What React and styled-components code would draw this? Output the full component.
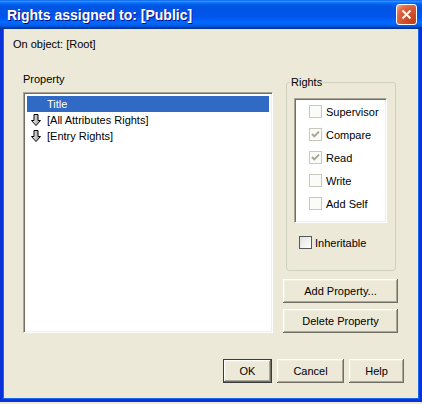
import React from "react";
import styled, { createGlobalStyle } from "styled-components";

const GlobalStyle = createGlobalStyle`
  html, body {
    margin: 0;
    padding: 0;
    background: #ece9d8;
  }
  body {
    font-family: "Liberation Sans", Arial, sans-serif;
    font-size: 11px;
    color: #000;
  }
  * {
    box-sizing: border-box;
  }
`;

// Window frame
const Window = styled.div`
  width: 422px;
  height: 402px;
  display: flex;
  flex-direction: column;
`;

const TitleBar = styled.div`
  height: 29px;
  flex: none;
  display: flex;
  align-items: center;
  justify-content: space-between;
  padding: 0 5px 0 7px;
  background: linear-gradient(
    180deg,
    #0058ee 0%,
    #3593ff 4%,
    #288eff 6%,
    #127dff 8%,
    #036ffc 10%,
    #0262ee 14%,
    #0057e5 20%,
    #0054e3 24%,
    #0055eb 56%,
    #005bf5 66%,
    #026afe 76%,
    #0062ef 86%,
    #0052d6 92%,
    #0040ab 94%,
    #003092 100%
  );
`;

const Title = styled.span`
  color: #fff;
  font-weight: bold;
  font-size: 14px;
  line-height: 16px;
  text-shadow: 1px 1px #0f1089;
`;

const CloseButton = styled.button`
  width: 21px;
  height: 21px;
  padding: 0;
  margin-top: -1px;
  border: 1px solid #fff;
  border-radius: 3px;
  display: flex;
  align-items: center;
  justify-content: center;
  background: radial-gradient(
    circle at 85% 85%,
    #c2401a 0%,
    #d6532d 50%,
    #e06f4e 75%,
    #f0b29c 100%
  );
`;

const Body = styled.div`
  flex: 1;
  display: flex;
  flex-direction: column;
  background: #ece9d8;
  border: 3px solid #0831d9;
  border-top: none;
  box-shadow: inset 1px 0 #166aee, inset -1px 0 #166aee, inset 0 -1px #166aee;
  padding: 9px 0 0 10px;
`;

const Caption = styled.div`
  line-height: 13px;
`;

// Main area
const MainRow = styled.div`
  display: flex;
  align-items: flex-start;
  gap: 10px;
  margin-top: 22px;
  padding-left: 10px;
`;

const LeftColumn = styled.div`
  width: 250px;
  display: flex;
  flex-direction: column;
`;

const RightColumn = styled.div`
  width: 115px;
  display: flex;
  flex-direction: column;
  margin-top: 9px;
`;

const FieldLabel = styled.div`
  line-height: 13px;
`;

const Sunken = styled.div`
  background: #fff;
  border-style: solid;
  border-width: 1px;
  border-color: #aca899 #fff #fff #aca899;
  box-shadow: inset 1px 1px #716f64, inset -1px -1px #f1efe2;
`;

const ListBox = styled(Sunken)`
  margin-top: 6px;
  height: 241px;
  padding: 3px;
`;

const ListRow = styled.div`
  height: 16px;
  display: flex;
  align-items: center;
  background: ${(p) => (p.$selected ? "#316ac5" : "transparent")};
  color: ${(p) => (p.$selected ? "#fff" : "#000")};
`;

const IconSlot = styled.span`
  width: 20px;
  height: 16px;
  flex: none;
  display: flex;
  align-items: center;
  padding-left: 4px;
`;

// Rights group
const GroupBox = styled.div`
  margin-left: 3px;
  width: 110px;
  border: 1px solid #d0d0bf;
  border-radius: 3px;
  display: flex;
  flex-direction: column;
  padding-bottom: 21px;
`;

const Legend = styled.span`
  align-self: flex-start;
  margin: -8px 0 0 3px;
  padding: 0 1px;
  line-height: 14px;
  background: #ece9d8;
`;

const CheckList = styled(Sunken)`
  margin: 9px 0 0 7px;
  width: 93px;
  height: 125px;
  padding-top: 1px;
`;

const CheckRow = styled.label`
  height: 23px;
  display: flex;
  align-items: center;
  padding-left: ${(p) => p.$indent}px;
  margin-top: ${(p) => p.$top || 0}px;
`;

const Box = styled.span`
  width: 13px;
  height: 13px;
  flex: none;
  margin-right: ${(p) => p.$gap}px;
  display: flex;
  align-items: center;
  justify-content: center;
  border: 1px solid ${(p) => (p.$disabled ? "#cac8bb" : "#55585a")};
  background: ${(p) =>
    p.$disabled ? "#fbfbf7" : "linear-gradient(135deg, #e2e2dd 0%, #fff 100%)"};
`;

const InheritRow = styled(CheckRow)`
  height: 13px;
`;

// Buttons
const Button = styled.button`
  height: 24px;
  width: ${(p) => p.$width}px;
  margin-top: ${(p) => p.$top || 0}px;
  padding: 0;
  font-family: "Liberation Sans", Arial, sans-serif;
  font-size: 11px;
  color: #000;
  background: #ece9d8;
  border: ${(p) => (p.$default ? "1px solid #3c3c3c" : "none")};
  box-shadow: inset -1px -1px #716f64, inset 1px 1px #fff,
    inset -2px -2px #aca899, inset 2px 2px #f1efe2;
`;

const Footer = styled.div`
  display: flex;
  justify-content: flex-end;
  gap: 5px;
  margin-top: 26px;
  padding-right: 15px;
`;

function DownArrow() {
  return (
    <svg width="10" height="13" viewBox="0 0 10 13">
      <defs>
        <linearGradient id="arw" x1="0" x2="1" y1="0" y2="0">
          <stop offset="0" stopColor="#ffffff" />
          <stop offset="1" stopColor="#8c8c8c" />
        </linearGradient>
      </defs>
      <polygon
        points="3,0.5 7,0.5 7,6.5 9.5,6.5 5,11.5 0.5,6.5 3,6.5"
        fill="url(#arw)"
        stroke="#000"
        strokeWidth="1"
      />
    </svg>
  );
}

function Check({ checked, disabled, gap }) {
  return (
    <Box $disabled={disabled} $gap={gap}>
      {checked && (
        <svg width="9" height="9" viewBox="0 0 9 9">
          <path
            d="M1 4 L3.3 6.4 L8 1.6"
            fill="none"
            stroke={disabled ? "#a8a699" : "#21a121"}
            strokeWidth="2"
          />
        </svg>
      )}
    </Box>
  );
}

const rights = [
  { name: "Supervisor", checked: false },
  { name: "Compare", checked: true },
  { name: "Read", checked: true },
  { name: "Write", checked: false },
  { name: "Add Self", checked: false },
];

const properties = [
  { name: "Title", icon: false, selected: true },
  { name: "[All Attributes Rights]", icon: true },
  { name: "[Entry Rights]", icon: true },
];

export default function App() {
  return (
    <>
      <GlobalStyle />
      <Window>
        <TitleBar>
          <Title>Rights assigned to: [Public]</Title>
          <CloseButton aria-label="Close">
            <svg width="11" height="11" viewBox="0 0 11 11">
              <path d="M1.5 1.5 L9.5 9.5 M9.5 1.5 L1.5 9.5" stroke="#fff" strokeWidth="2" />
            </svg>
          </CloseButton>
        </TitleBar>
        <Body>
          <Caption>On object: [Root]</Caption>
          <MainRow>
            <LeftColumn>
              <FieldLabel>Property</FieldLabel>
              <ListBox>
                {properties.map((p) => (
                  <ListRow key={p.name} $selected={p.selected}>
                    <IconSlot>{p.icon && <DownArrow />}</IconSlot>
                    {p.name}
                  </ListRow>
                ))}
              </ListBox>
            </LeftColumn>
            <RightColumn>
              <GroupBox>
                <Legend>Rights</Legend>
                <CheckList>
                  {rights.map((r) => (
                    <CheckRow key={r.name} $indent={14}>
                      <Check checked={r.checked} disabled gap={4} />
                      {r.name}
                    </CheckRow>
                  ))}
                </CheckList>
                <InheritRow $indent={12} $top={13}>
                  <Check gap={3} />
                  Inheritable
                </InheritRow>
              </GroupBox>
              <Button $width={115} $top={8}>Add Property...</Button>
              <Button $width={115} $top={6}>Delete Property</Button>
            </RightColumn>
          </MainRow>
          <Footer>
            <Button $width={49} $default>OK</Button>
            <Button $width={67}>Cancel</Button>
            <Button $width={55}>Help</Button>
          </Footer>
        </Body>
      </Window>
    </>
  );
}
